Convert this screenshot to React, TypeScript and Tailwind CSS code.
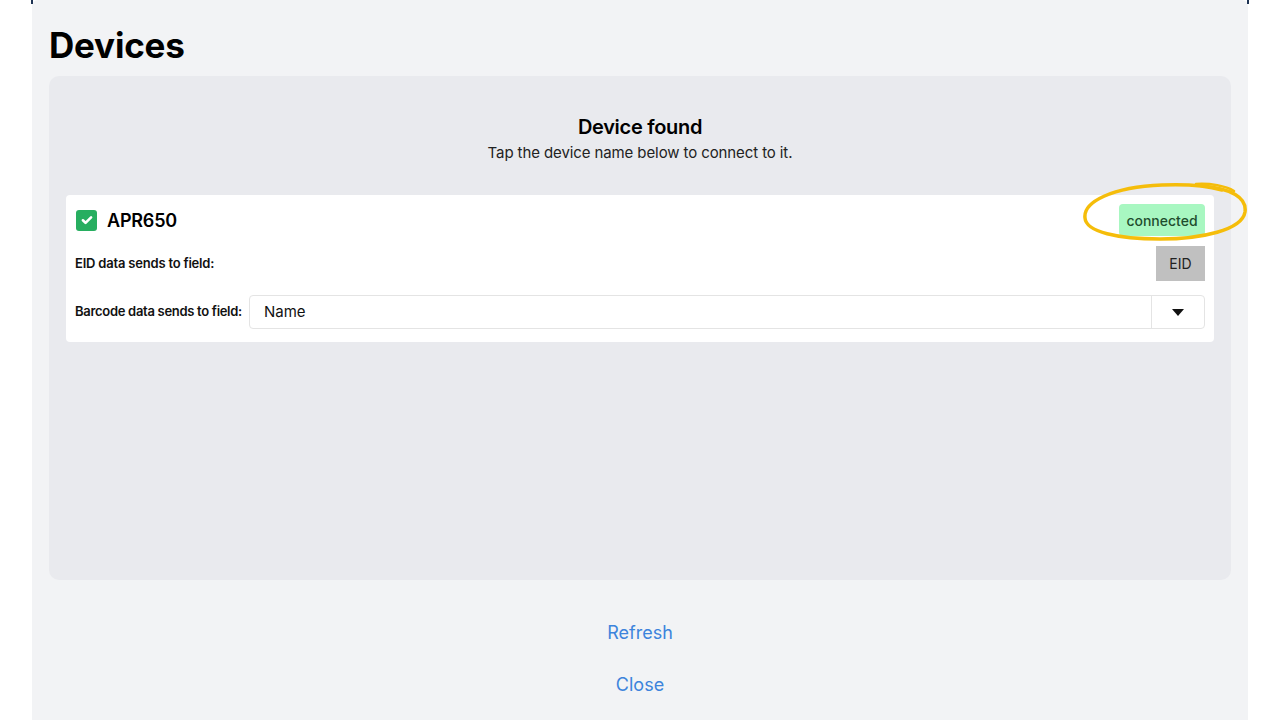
import React from 'react';

export default function App() {
  return (
    <div className="flex h-[720px] w-[1280px] justify-center overflow-hidden bg-white font-['Inter',sans-serif] text-black">
      <div className="relative flex w-[1216px] flex-col rounded-t-[6px] bg-[#f2f3f5] px-[17px]">
        {/* tiny dark corners of the backdrop */}
        <div className="absolute -left-[1px] top-0 h-[4px] w-[2px] bg-[#1e3354]" />
        <div className="absolute -right-[1px] top-0 h-[4px] w-[2px] bg-[#1e3354]" />

        <h1 className="mt-[24px] h-[52px] text-[35px] font-bold leading-[42px] tracking-[-0.2px]">Devices</h1>

        <div className="flex h-[504px] flex-col rounded-[10px] bg-[#e9eaee] px-[17px]">
          <div className="mt-[39px] text-center text-[20px] font-semibold leading-[24px] tracking-[-0.3px]">Device found</div>
          <div className="mt-[4px] text-center text-[15px] leading-[20px] tracking-[-0.1px] text-[#222]">Tap the device name below to connect to it.</div>

          <div className="mt-[32px] flex h-[147px] flex-col rounded-[4px] bg-white px-[9px] pt-[9px]">
            <div className="flex h-[32px] items-center">
              <div className="ml-[1px] flex h-[21px] w-[21px] items-center justify-center rounded-[3px] bg-[#27ae60]">
                <svg width="14" height="14" viewBox="0 0 24 24" fill="none" stroke="white" strokeWidth="4.5" strokeLinecap="round" strokeLinejoin="round">
                  <path d="M5 12.5l4.5 4.5L19 7.5" />
                </svg>
              </div>
              <span className="ml-[10px] text-[18px] font-semibold tracking-[-0.2px]">APR650</span>
              <div className="relative ml-auto">
                <div className="flex h-[32px] w-[86px] items-center justify-center rounded-[4px] bg-[#a8f7c1] text-[14px] font-medium text-[#1f4d2e]">connected</div>
                <svg className="pointer-events-none absolute -left-[37px] -top-[22px]" width="168" height="64" viewBox="0 0 168 64" fill="none">
                  <path d="M118 4 C150 6 165 16 163 30 C160 48 120 57 78 57 C36 57 4 50 3 36 C1 20 30 5 80 3 C104 2 126 4 140 8" stroke="#f5bd0a" strokeWidth="3.5" strokeLinecap="round" />
                  <path d="M114 2 C128 1 144 4 152 9" stroke="#f5bd0a" strokeWidth="2.5" strokeLinecap="round" />
                </svg>
              </div>
            </div>

            <div className="mt-[10px] flex h-[35px] items-center">
              <span className="whitespace-nowrap text-[13px] font-semibold tracking-[-0.2px] text-[#111]">EID data sends to field:</span>
              <div className="ml-auto flex h-[35px] w-[49px] items-center justify-center bg-[#c0c0c0] text-[14px] text-[#222]">EID</div>
            </div>

            <div className="mt-[14px] flex h-[34px] items-center">
              <span className="w-[174px] shrink-0 whitespace-nowrap text-[13px] font-semibold tracking-[-0.3px] text-[#111]">Barcode data sends to field:</span>
              <div className="flex h-[34px] flex-1 items-center rounded-[4px] border border-[#e4e4e4]">
                <span className="flex-1 pl-[14px] text-[15px] text-[#111]">Name</span>
                <div className="flex h-full w-[53px] items-center justify-center border-l border-[#e4e4e4]">
                  <svg width="12" height="7" viewBox="0 0 12 7"><path d="M0 0h12L6 7z" fill="#111" /></svg>
                </div>
              </div>
            </div>
          </div>
        </div>

        <div className="mt-[41px] text-center text-[18px] leading-[24px] text-[#3d84dc]">Refresh</div>
        <div className="mt-[28px] text-center text-[18px] leading-[24px] text-[#3d84dc]">Close</div>
      </div>
    </div>
  );
}
